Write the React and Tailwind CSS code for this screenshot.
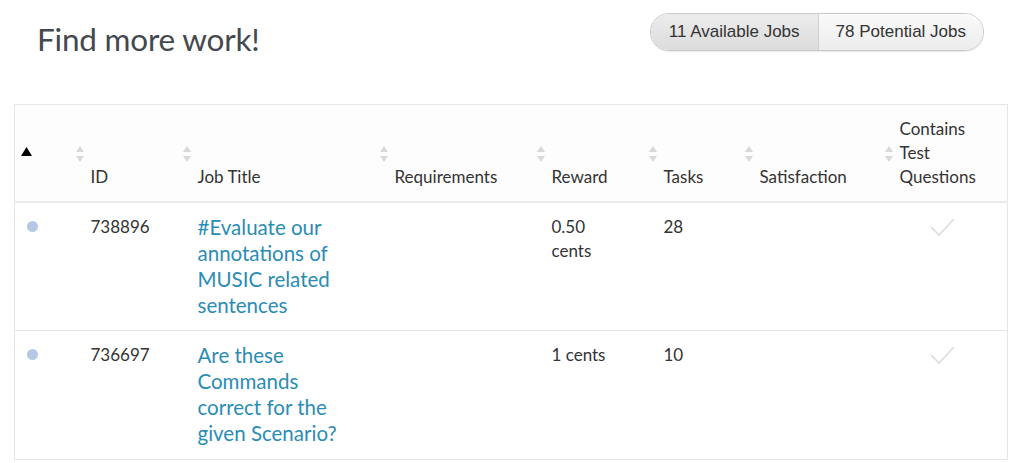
import React from 'react';

const cols = [
  { label: '', w: 'w-[56px]' },
  { label: 'ID', w: 'w-[107px]' },
  { label: 'Job Title', w: 'w-[197px]' },
  { label: 'Requirements', w: 'w-[157px]' },
  { label: 'Reward', w: 'w-[112px]' },
  { label: 'Tasks', w: 'w-[96px]' },
  { label: 'Satisfaction', w: 'w-[140px]' },
  { label: 'Contains Test Questions', w: 'w-[128px]' },
];

const jobs = [
  {
    id: '738896',
    title: '#Evaluate our annotations of MUSIC related sentences',
    reward: '0.50 cents',
    tasks: '28',
  },
  {
    id: '736697',
    title: 'Are these Commands correct for the given Scenario?',
    reward: '1 cents',
    tasks: '10',
  },
];

const SortArrows = () => (
  <svg className="absolute left-[4px] top-[40px]" width="10" height="18" viewBox="0 0 10 18">
    <path d="M5 1 L9 7 L1 7 Z" fill="#d9d9d9" />
    <path d="M5 17 L9 11 L1 11 Z" fill="#d9d9d9" />
  </svg>
);

const Check = () => (
  <svg width="26" height="20" viewBox="0 0 26 20" fill="none">
    <path d="M1 10 L9 18 L24 2" stroke="#dcdcdc" strokeWidth="1.6" />
  </svg>
);

export default function App() {
  return (
    <div className="w-[1024px] h-[463px] bg-white overflow-hidden font-['Lato',sans-serif] text-[#333]">
      <div className="flex items-start justify-between pl-[37px] pr-[40px] pt-[13px]">
        <h1 className="text-[31.5px] leading-[52px] text-[#43494e] tracking-[-0.2px]">Find more work!</h1>
        <div className="flex h-[38px] rounded-full border border-[#c9c9c9] overflow-hidden font-['Liberation_Sans',sans-serif] text-[17px] text-[#333] shadow-[0_1px_1px_rgba(0,0,0,0.08)]">
          <div className="flex items-center px-[18px] bg-gradient-to-b from-[#ececec] to-[#dcdcdc] border-r border-[#cfcfcf]">
            11 Available Jobs
          </div>
          <div className="flex items-center px-[17px] bg-gradient-to-b from-[#fafafa] to-[#ececec]">
            78 Potential Jobs
          </div>
        </div>
      </div>

      <div className="pl-[14px] pr-[17px] pt-[39px]">
        <table className="w-[993px] table-fixed border-collapse border border-[#e6e6e6]">
          <thead>
            <tr className="bg-[#fdfdfd] border-b-2 border-[#ececec]">
              {cols.map((c, i) => (
                <th
                  key={i}
                  className={`${c.w} relative h-[97px] align-bottom text-left font-normal text-[17px] leading-[24px] text-[#333] pb-[12px] ${i === 0 ? 'pl-[6px]' : 'pl-[20px]'} ${i === 7 ? 'pr-[30px]' : ''}`}
                >
                  {i === 0 ? (
                    <svg className="absolute left-[6px] top-[42px]" width="11" height="9" viewBox="0 0 11 9">
                      <path d="M5.5 0 L11 9 L0 9 Z" fill="#000" />
                    </svg>
                  ) : (
                    <SortArrows />
                  )}
                  {c.label}
                </th>
              ))}
            </tr>
          </thead>
          <tbody>
            {jobs.map((j) => (
              <tr key={j.id} className="border-b border-[#e6e6e6] align-top">
                <td className="pt-[18px] pl-[12px] h-[129px]">
                  <div className="w-[11px] h-[11px] rounded-full bg-[#b5c8e4]" />
                </td>
                <td className="pl-[20px] pt-[12px] text-[17px] leading-[24px]">{j.id}</td>
                <td className="pl-[20px] pt-[11px] pb-[11px] text-[20.5px] leading-[26px] text-[#2b8cb5] pr-[28px]">{j.title}</td>
                <td className="pl-[20px]"></td>
                <td className="pl-[20px] pt-[12px] text-[17px] leading-[24px] pr-[28px]">{j.reward}</td>
                <td className="pl-[20px] pt-[12px] text-[17px] leading-[24px]">{j.tasks}</td>
                <td className="pl-[20px]"></td>
                <td className="pl-[50px] pt-[14px]">
                  <Check />
                </td>
              </tr>
            ))}
          </tbody>
        </table>
      </div>
    </div>
  );
}
